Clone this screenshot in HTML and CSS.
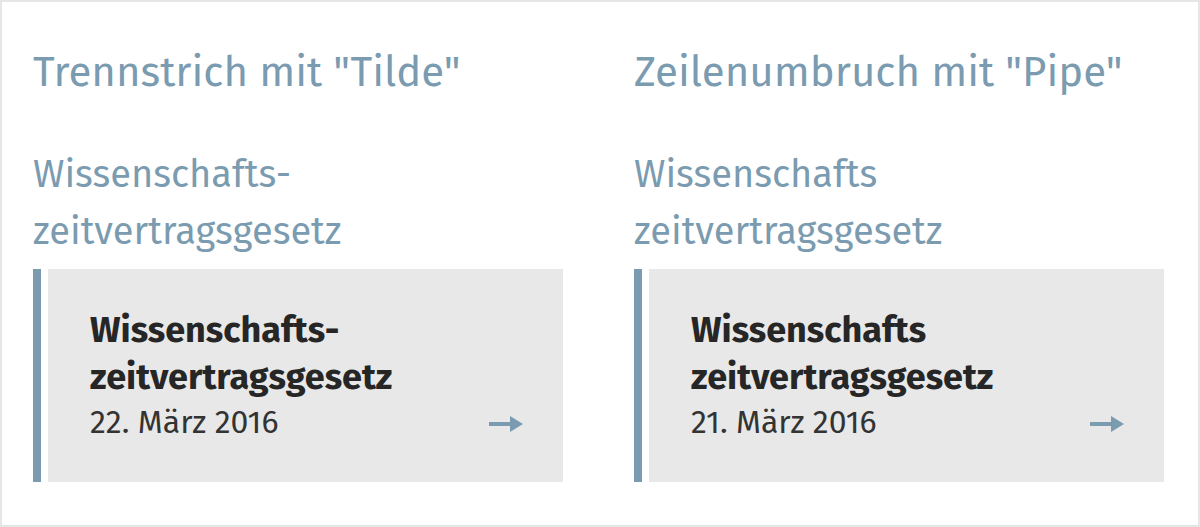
FILE: index.html
```html
<!DOCTYPE html>
<html lang="de">
<head>
  <meta charset="UTF-8" />
  <meta name="viewport" content="width=device-width, initial-scale=1.0" />
  <title>Trennstrich und Zeilenumbruch</title>
  <link rel="stylesheet" href="styles.css">
</head>
<body>
  <div class="rahmen">

    <!-- Variante 1: Tilde -->
    <section class="spalte">
      <h2 class="titel">Trennstrich mit "Tilde"</h2>
      <p class="wort">Wissenschafts-<br>zeitvertragsgesetz</p>
      <a class="karte" href="#">
        <div class="karte-inhalt">
          <div class="karte-text">
            <strong>Wissenschafts-<br>zeitvertragsgesetz</strong>
            <span class="datum">22. März 2016</span>
          </div>
          <svg class="pfeil" width="34" height="18" viewBox="0 0 34 18">
            <rect x="0" y="7" width="23" height="4" />
            <polygon points="21,1 34,9 21,17" />
          </svg>
        </div>
      </a>
    </section>

    <!-- Variante 2: Pipe -->
    <section class="spalte">
      <h2 class="titel">Zeilenumbruch mit "Pipe"</h2>
      <p class="wort">Wissenschafts<br>zeitvertragsgesetz</p>
      <a class="karte" href="#">
        <div class="karte-inhalt">
          <div class="karte-text">
            <strong>Wissenschafts<br>zeitvertragsgesetz</strong>
            <span class="datum">21. März 2016</span>
          </div>
          <svg class="pfeil" width="34" height="18" viewBox="0 0 34 18">
            <rect x="0" y="7" width="23" height="4" />
            <polygon points="21,1 34,9 21,17" />
          </svg>
        </div>
      </a>
    </section>

  </div>
</body>
</html>
```

FILE: styles.css
```css
html, body {
  margin: 0;
  padding: 0;
  background: #fff;
  font-family: "Fira Sans", Roboto, sans-serif;
}

.rahmen {
  box-sizing: border-box;
  width: 1200px;
  height: 527px;
  border: 2px solid #e6e6e6;
  padding: 42px 34px 0 31px;
  display: grid;
  grid-template-columns: 1fr 1fr;
  column-gap: 71px;
  align-items: start;
}

.titel {
  margin: 0;
  font-size: 42px;
  line-height: 57px;
  font-weight: normal;
  color: #7a9bb0;
}

.wort {
  margin: 45px 0 9px;
  font-size: 38px;
  line-height: 57px;
  color: #7a9bb0;
}

.karte {
  display: flex;
  border-left: 8px solid #7a9bb0;
  padding-left: 7px;
  text-decoration: none;
}

.karte-inhalt {
  flex: 1;
  display: flex;
  justify-content: space-between;
  align-items: flex-end;
  background: #e8e8e8;
  padding: 38px 40px 39px 42px;
}

.karte-text strong {
  display: block;
  font-size: 36px;
  line-height: 47px;
  color: #262626;
}

.datum {
  display: block;
  font-size: 32px;
  line-height: 42px;
  color: #333;
}

.pfeil {
  fill: #7a9bb0;
  margin-bottom: 10px;
}
```
